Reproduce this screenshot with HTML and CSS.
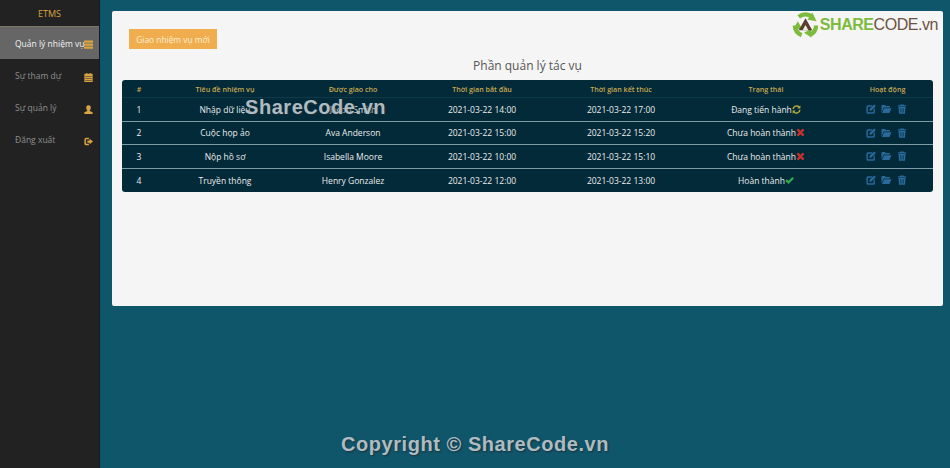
FILE: index.html
```html
<!DOCTYPE html>
<html lang="vi">
  <head>
    <meta charset="UTF-8" />
    <meta name="viewport" content="width=device-width, initial-scale=1.0" />
    <title>ETMS</title>
    <link rel="stylesheet" href="styles.css">
  </head>
  <body>
    <div class="page">
      <!-- sidebar -->
      <nav class="sidebar">
        <div class="brand">ETMS</div>
        <ul class="menu">
          <li class="active">
            <span>Quản lý nhiệm vụ</span>
            <svg class="menu-icon" viewBox="0 0 12 12"><path d="M0 .5h12v3H0zM0 4.500h12v3H0zM0 8.500h12v3H0z" /></svg>
          </li>
          <li>
            <span>Sự tham dự</span>
            <svg class="menu-icon" viewBox="0 0 12 12"><path d="M.5 1h2.500V0h1.500v1h3V0H9v1h2.500v11H.5zM1.500 4v.5h9V4zM1.500 7v.5h9V7zM1.500 9.700v.5h9v-.5z" /></svg>
          </li>
          <li>
            <span>Sự quản lý</span>
            <svg class="menu-icon" viewBox="0 0 12 12"><path d="M6 .5a3 3 0 0 1 3 3.200C9 5.300 8.300 6.600 7.600 7.200V8L11.500 9.500V12H.5V9.500L4.400 8V7.200C3.700 6.600 3 5.300 3 3.700A3 3 0 0 1 6 .5z" /></svg>
          </li>
          <li>
            <span>Đăng xuất</span>
            <svg class="menu-icon" viewBox="0 0 12 12"><path d="M.5 3.500a2.500 2.500 0 0 1 2.500-2.500h3.500v2H3.400a.9.9 0 0 0-.9.9v4.200c0 .5.400.9.900.9h3.100v2H3A2.500 2.500 0 0 1 .5 8.500zM7.500 2.300 12 6 7.500 9.700V7.500H4.500v-3h3z" /></svg>
          </li>
        </ul>
      </nav>

      <main class="content">
        <section class="panel">
          <button class="btn-new" type="button">Giao nhiệm vụ mới</button>
          <h1 class="title">Phần quản lý tác vụ</h1>
          <table class="tasks">
            <colgroup>
              <col class="c-num" /><col class="c-task" /><col class="c-user" /><col class="c-start" /><col class="c-end" /><col class="c-status" /><col class="c-act" />
            </colgroup>
            <thead>
              <tr>
                <th>#</th>
                <th>Tiêu đề nhiệm vụ</th>
                <th>Được giao cho</th>
                <th>Thời gian bắt đầu</th>
                <th>Thời gian kết thúc</th>
                <th>Trạng thái</th>
                <th>Hoạt động</th>
              </tr>
            </thead>
            <tbody>
              <tr>
                <td>1</td>
                <td>Nhập dữ liệu</td>
                <td>Jacob Smith</td>
                <td>2021-03-22 14:00</td>
                <td>2021-03-22 17:00</td>
                <td>Đang tiến hành<svg class="status-icon" viewBox="0 0 12 12" fill="none" stroke="#b9a93a" stroke-width="1.900"><path d="M1.500 5.500A4.600 4.600 0 0 1 9.500 2.800M10.500 6.500A4.600 4.600 0 0 1 2.500 9.200" /><path d="M11.200 .4v4.200H7zM.8 11.600V7.400h4.200z" fill="#b9a93a" stroke="none" /></svg></td>
                <td class="actions">
                  <svg class="act-icon" viewBox="0 0 12 12"><use href="#i-edit" /></svg>
                  <svg class="act-icon act-folder" viewBox="0 0 12 12"><use href="#i-folder" /></svg>
                  <svg class="act-icon" viewBox="0 0 12 12"><use href="#i-trash" /></svg>
                </td>
              </tr>
              <tr>
                <td>2</td>
                <td>Cuộc họp ảo</td>
                <td>Ava Anderson</td>
                <td>2021-03-22 15:00</td>
                <td>2021-03-22 15:20</td>
                <td>Chưa hoàn thành<svg class="status-icon" viewBox="0 0 12 12"><use href="#i-cross" /></svg></td>
                <td class="actions">
                  <svg class="act-icon" viewBox="0 0 12 12"><use href="#i-edit" /></svg>
                  <svg class="act-icon act-folder" viewBox="0 0 12 12"><use href="#i-folder" /></svg>
                  <svg class="act-icon" viewBox="0 0 12 12"><use href="#i-trash" /></svg>
                </td>
              </tr>
              <tr>
                <td>3</td>
                <td>Nộp hồ sơ</td>
                <td>Isabella Moore</td>
                <td>2021-03-22 10:00</td>
                <td>2021-03-22 15:10</td>
                <td>Chưa hoàn thành<svg class="status-icon" viewBox="0 0 12 12"><use href="#i-cross" /></svg></td>
                <td class="actions">
                  <svg class="act-icon" viewBox="0 0 12 12"><use href="#i-edit" /></svg>
                  <svg class="act-icon act-folder" viewBox="0 0 12 12"><use href="#i-folder" /></svg>
                  <svg class="act-icon" viewBox="0 0 12 12"><use href="#i-trash" /></svg>
                </td>
              </tr>
              <tr>
                <td>4</td>
                <td>Truyền thông</td>
                <td>Henry Gonzalez</td>
                <td>2021-03-22 12:00</td>
                <td>2021-03-22 13:00</td>
                <td>Hoàn thành<svg class="status-icon" viewBox="0 0 12 12"><path fill="#2fa84f" d="M.3 6.500 2.500 4.300 4.600 6.400 9.800 1.200 12 3.400 4.600 10.800z" /></svg></td>
                <td class="actions">
                  <svg class="act-icon" viewBox="0 0 12 12"><use href="#i-edit" /></svg>
                  <svg class="act-icon act-folder" viewBox="0 0 12 12"><use href="#i-folder" /></svg>
                  <svg class="act-icon" viewBox="0 0 12 12"><use href="#i-trash" /></svg>
                </td>
              </tr>
            </tbody>
          </table>

          <!-- logo -->
          <div class="logo">
            <svg class="logo-mark" viewBox="0 0 28 28">
              <g fill="none" stroke="#7dbb3c" stroke-width="4.500">
                <path d="M7 5.500A11 11 0 0 1 21 5.500" />
                <path d="M25 14.500A11 11 0 0 1 18 24.500" />
                <path d="M10 24.500A11 11 0 0 1 3 14.500" />
              </g>
              <path d="M21 1 25.500 10 16 8.500zM20 27 12.500 22 20 18zM1 19 6 10 10.500 18z" fill="#7dbb3c" />
              <path d="M14 7 21 19.500H7z" fill="#5a3f2c" />
              <path d="M14 14 17 19.500H11z" fill="#e9efe0" />
            </svg>
            <span class="logo-text"><b>SHARE</b>CODE.vn</span>
          </div>
        </section>

        <div class="mark mark-table">ShareCode.vn</div>
        <div class="mark mark-copy">Copyright © ShareCode.vn</div>
      </main>
    </div>

    <!-- shared icons -->
    <svg class="defs" aria-hidden="true">
      <defs>
        <path id="i-edit" d="M2.500 1.500H8L6.500 3.200H3A.8.8 0 0 0 2.200 4V9.200C2.200 9.600 2.600 10 3 10H8.200A.8.8 0 0 0 9 9.200V6.500L10.700 4.800V9.500A2 2 0 0 1 8.700 11.700H2.500A2 2 0 0 1 .5 9.500V3.500A2 2 0 0 1 2.500 1.500ZM10 .5 11.800 2.300 6.500 7.800 4 8.300 4.500 5.800Z" />
        <path id="i-folder" d="M0 2.300A1 1 0 0 1 1 1.300H4.200L5.200 2.500H10V4.200H2.700L0 9.800ZM3.200 5H12L9.500 10.700H.5Z" />
        <path id="i-trash" d="M4 .5H8L8.400 1.600H11V3H1V1.600H3.600ZM1.800 3.700H10.200L9.600 11.700H2.400ZM3.800 5V10.300H4.400V5ZM5.700 5V10.300H6.300V5ZM7.600 5V10.300H8.200V5Z" />
        <path id="i-cross" fill="#c9302c" d="M3 .8 6 3.800 9 .8 11.200 3 8.200 6 11.200 9 9 11.200 6 8.200 3 11.200 .8 9 3.800 6 .8 3Z" />
      </defs>
    </svg>
  </body>
</html>
```

FILE: styles.css
```css
* {
  box-sizing: border-box;
}

html,
body {
  height: 100%;
  margin: 0;
}

body {
  font-family: "Open Sans", "Noto Sans", sans-serif;
  overflow: hidden;
}

.page {
  display: flex;
  height: 468px;
}

/* sidebar */
.sidebar {
  flex: 0 0 100px;
  width: 100px;
  min-width: 0;
  background-color: #222;
  border-right: 1px solid #1a1a1a;
}

.brand {
  height: 26px;
  padding-top: 8px;
  color: #d9a441;
  font-size: 9px;
  line-height: 12px;
  text-align: center;
}

.menu {
  list-style: none;
  padding: 0;
  margin: 0;
}

.menu li {
  display: flex;
  align-items: center;
  justify-content: space-between;
  height: 32px;
  padding: 0 6px 0 15px;
  color: #8f8f8f;
  font-size: 8.500px;
  white-space: nowrap;
}

.menu li.active {
  height: 33px;
  color: #f2f2f2;
  background-color: #666;
  border-top: 1px solid #7c7764;
}

.menu-icon {
  flex: none;
  width: 9px;
  height: 9px;
  margin-top: 4px;
  fill: #d9a441;
}

.active .menu-icon {
  margin-top: 2px;
}

/* main area */
.content {
  position: relative;
  flex: 1;
  min-width: 0;
  padding: 11px 7px 0 12px;
  background-color: #10566b;
}

.panel {
  position: relative;
  height: 295px;
  padding: 18px 10px 0;
  background-color: #f5f5f5;
  border-radius: 2px;
}

.btn-new {
  display: block;
  width: 88px;
  height: 20px;
  margin-left: 7px;
  padding: 0;
  color: #fbeed5;
  font-family: inherit;
  font-size: 8.400px;
  background-color: #f0ad4e;
  border: 0;
}

.title {
  margin: 8px 0 0;
  height: 23px;
  color: #555;
  font-size: 12px;
  font-weight: 400;
  line-height: 18px;
  text-align: center;
}

.tasks {
  width: 811px;
  border-collapse: separate;
  border-spacing: 0;
  table-layout: fixed;
  color: #ececec;
  font-size: 8.500px;
  text-align: center;
  background-color: #022a39;
  border-radius: 3px;
}

.c-num { width: 34px; }
.c-task { width: 138px; }
.c-user { width: 118px; }
.c-start { width: 140px; }
.c-end { width: 138px; }
.c-status { width: 152px; }
.c-act { width: 91px; }

.tasks th {
  height: 18px;
  padding: 0;
  color: #c9a94f;
  font-size: 7.100px;
  font-weight: 600;
  border-bottom: 1px solid #0d3a48;
}

.tasks td {
  height: 23.500px;
  padding: 0;
  border-bottom: 1px solid #7f9ba5;
}

.tasks tr:last-child td {
  border-bottom: 0;
}

.status-icon {
  width: 9px;
  height: 9px;
  vertical-align: -1px;
}

.actions {
  padding-right: 2px;
}

.tasks .actions {
  padding: 0 2px 2px 0;
}

.act-icon {
  width: 10px;
  height: 10px;
  margin: 0 1.200px;
  fill: #2a6a9c;
  vertical-align: middle;
}

.act-folder {
  width: 11px;
}

/* logo */
.logo {
  position: absolute;
  top: 0;
  right: 5px;
  display: flex;
  align-items: center;
  gap: 1px;
}

.logo-mark {
  width: 27px;
  height: 28px;
}

.logo-text {
  color: #6b5241;
  font-family: "Liberation Sans", sans-serif;
  font-size: 16px;
  letter-spacing: -.45px;
}

.logo-text b {
  color: #7dbb3c;
  font-weight: 700;
}

/* watermarks */
.mark {
  position: absolute;
  color: #aebcc2;
  font-family: "Liberation Sans", sans-serif;
  font-size: 20px;
  font-weight: 700;
  letter-spacing: .55px;
  white-space: nowrap;
  text-shadow: 1px 1px 2px #1c2f38;
}

.mark-table {
  top: 96px;
  left: 145px;
}

.mark-copy {
  top: 433px;
  left: 241px;
}

.defs {
  position: absolute;
  width: 0;
  height: 0;
}
```
